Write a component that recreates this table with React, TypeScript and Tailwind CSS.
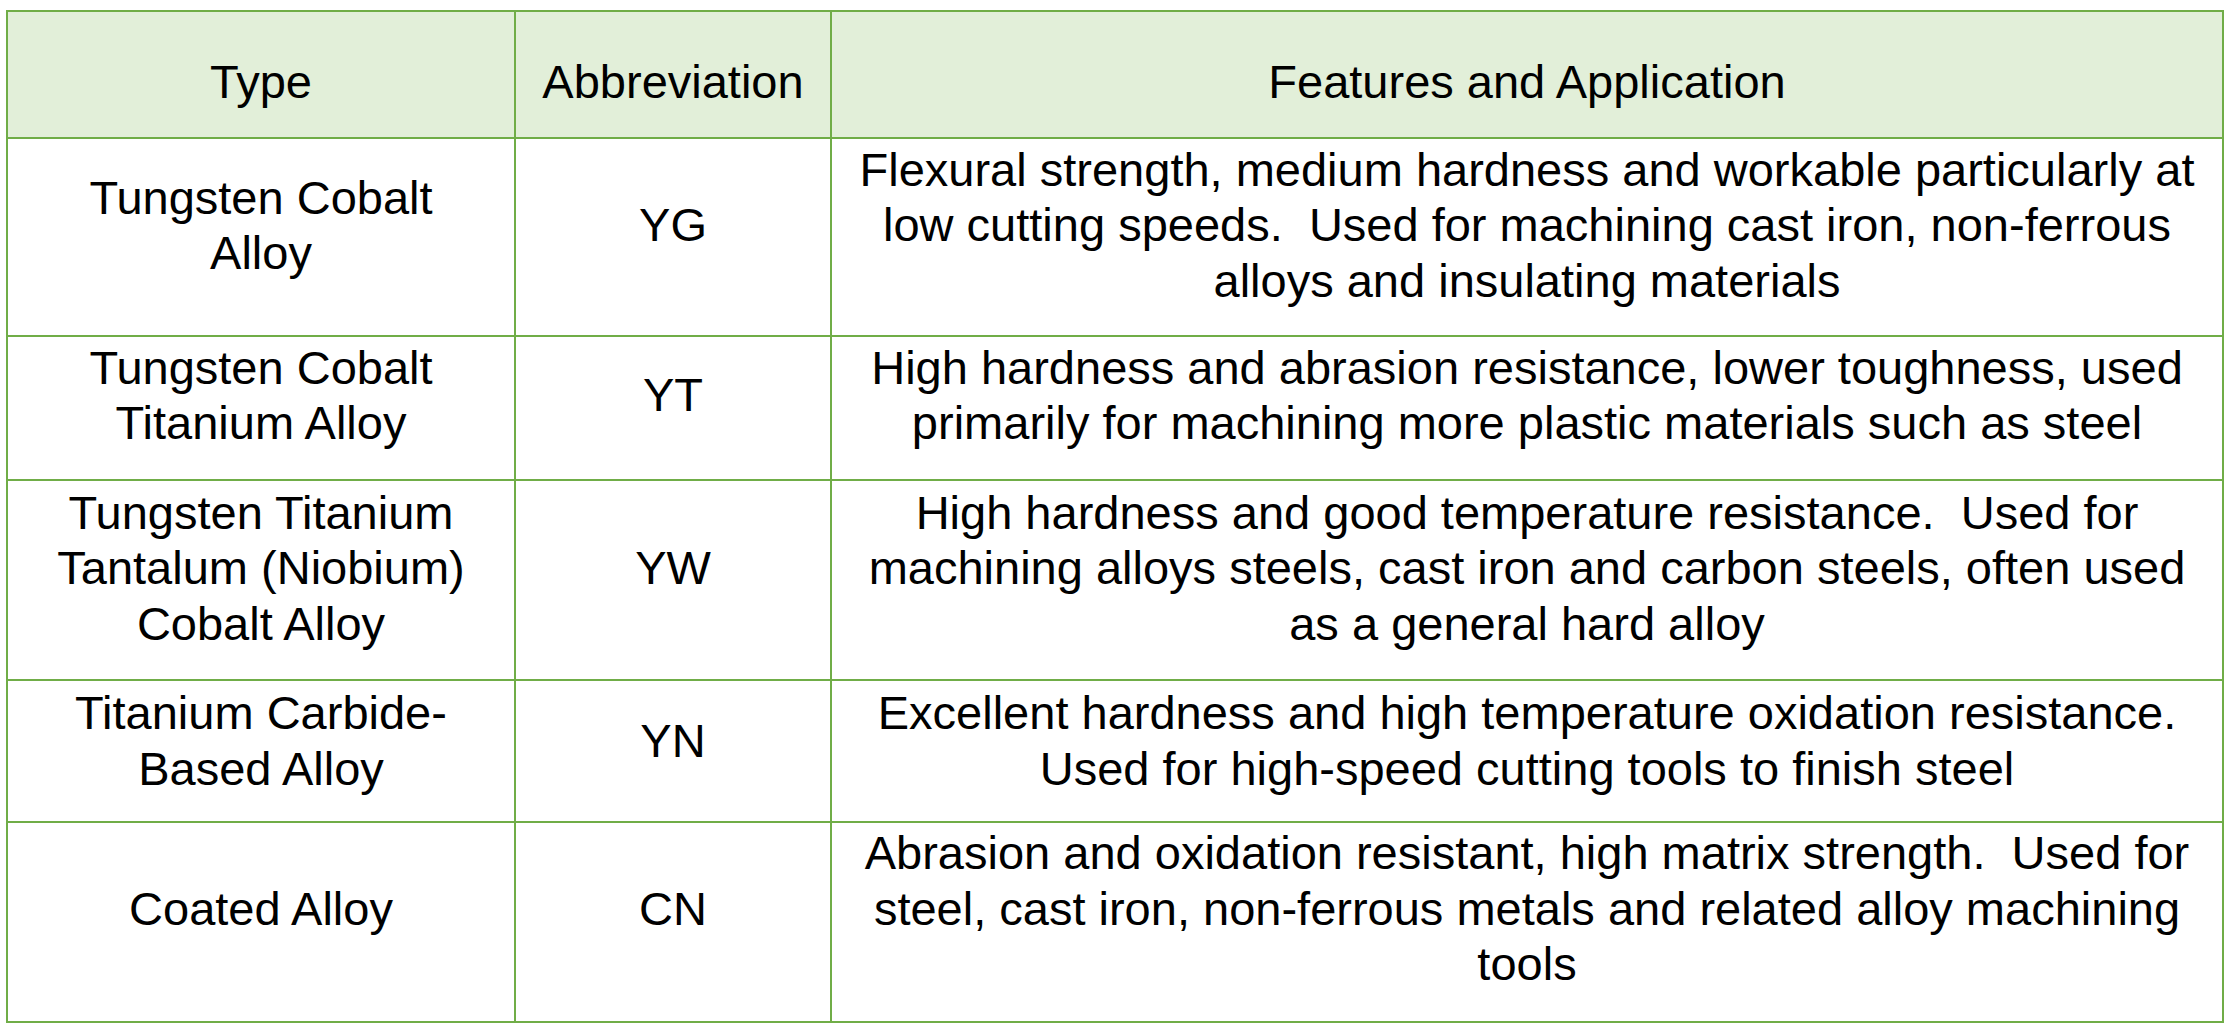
const GREEN = 'border-[#70ad47]'

type Row = {
  type: string[]
  abbr: string
  features: string[]
  height: string
  shift: string
}

const rows: Row[] = [
  {
    type: ['Tungsten Cobalt', 'Alloy'],
    abbr: 'YG',
    features: [
      'Flexural strength, medium hardness and workable particularly at',
      'low cutting speeds.  Used for machining cast iron, non-ferrous',
      'alloys and insulating materials',
    ],
    height: 'h-[198px]',
    shift: 'pb-[24px]',
  },
  {
    type: ['Tungsten Cobalt', 'Titanium Alloy'],
    abbr: 'YT',
    features: [
      'High hardness and abrasion resistance, lower toughness, used',
      'primarily for machining more plastic materials such as steel',
    ],
    height: 'h-[144px]',
    shift: 'pb-[26px]',
  },
  {
    type: ['Tungsten Titanium', 'Tantalum (Niobium)', 'Cobalt Alloy'],
    abbr: 'YW',
    features: [
      'High hardness and good temperature resistance.  Used for',
      'machining alloys steels, cast iron and carbon steels, often used',
      'as a general hard alloy',
    ],
    height: 'h-[200px]',
    shift: 'pb-[24px]',
  },
  {
    type: ['Titanium Carbide-', 'Based Alloy'],
    abbr: 'YN',
    features: [
      'Excellent hardness and high temperature oxidation resistance.',
      'Used for high-speed cutting tools to finish steel',
    ],
    height: 'h-[142px]',
    shift: 'pb-[21px]',
  },
  {
    type: ['Coated Alloy'],
    abbr: 'CN',
    features: [
      'Abrasion and oxidation resistant, high matrix strength.  Used for',
      'steel, cast iron, non-ferrous metals and related alloy machining',
      'tools',
    ],
    height: 'h-[200px]',
    shift: 'pb-[27px]',
  },
]

function Cell({ lines, height, shift, head }: { lines: string[]; height: string; shift: string; head?: boolean }) {
  return (
    <div
      className={`flex flex-col items-center justify-center text-center border-r-2 border-b-2 ${GREEN} ${height} ${shift} ${
        head ? 'bg-[#e2efd9]' : 'bg-white'
      }`}
    >
      {lines.map((l, i) => (
        <div key={i} className="whitespace-pre">
          {l}
        </div>
      ))}
    </div>
  )
}

export default function App() {
  return (
    <div className="min-h-screen bg-white pt-[10px] pl-[6px] text-black text-[47px] leading-[55.5px] font-['Liberation_Sans',Arial,Helvetica,sans-serif]">
      <div className={`grid grid-cols-[508px_316px_1392px] w-fit border-l-2 border-t-2 ${GREEN}`}>
        {/* Header */}
        <Cell lines={['Type']} height="h-[127px]" shift="pt-[14px]" head />
        <Cell lines={['Abbreviation']} height="h-[127px]" shift="pt-[14px]" head />
        <Cell lines={['Features and Application']} height="h-[127px]" shift="pt-[14px]" head />

        {rows.map((r) => (
          <div key={r.abbr} className="contents">
            <Cell lines={r.type} height={r.height} shift={r.shift} />
            <Cell lines={[r.abbr]} height={r.height} shift={r.shift} />
            <Cell lines={r.features} height={r.height} shift={r.shift} />
          </div>
        ))}
      </div>
    </div>
  )
}
